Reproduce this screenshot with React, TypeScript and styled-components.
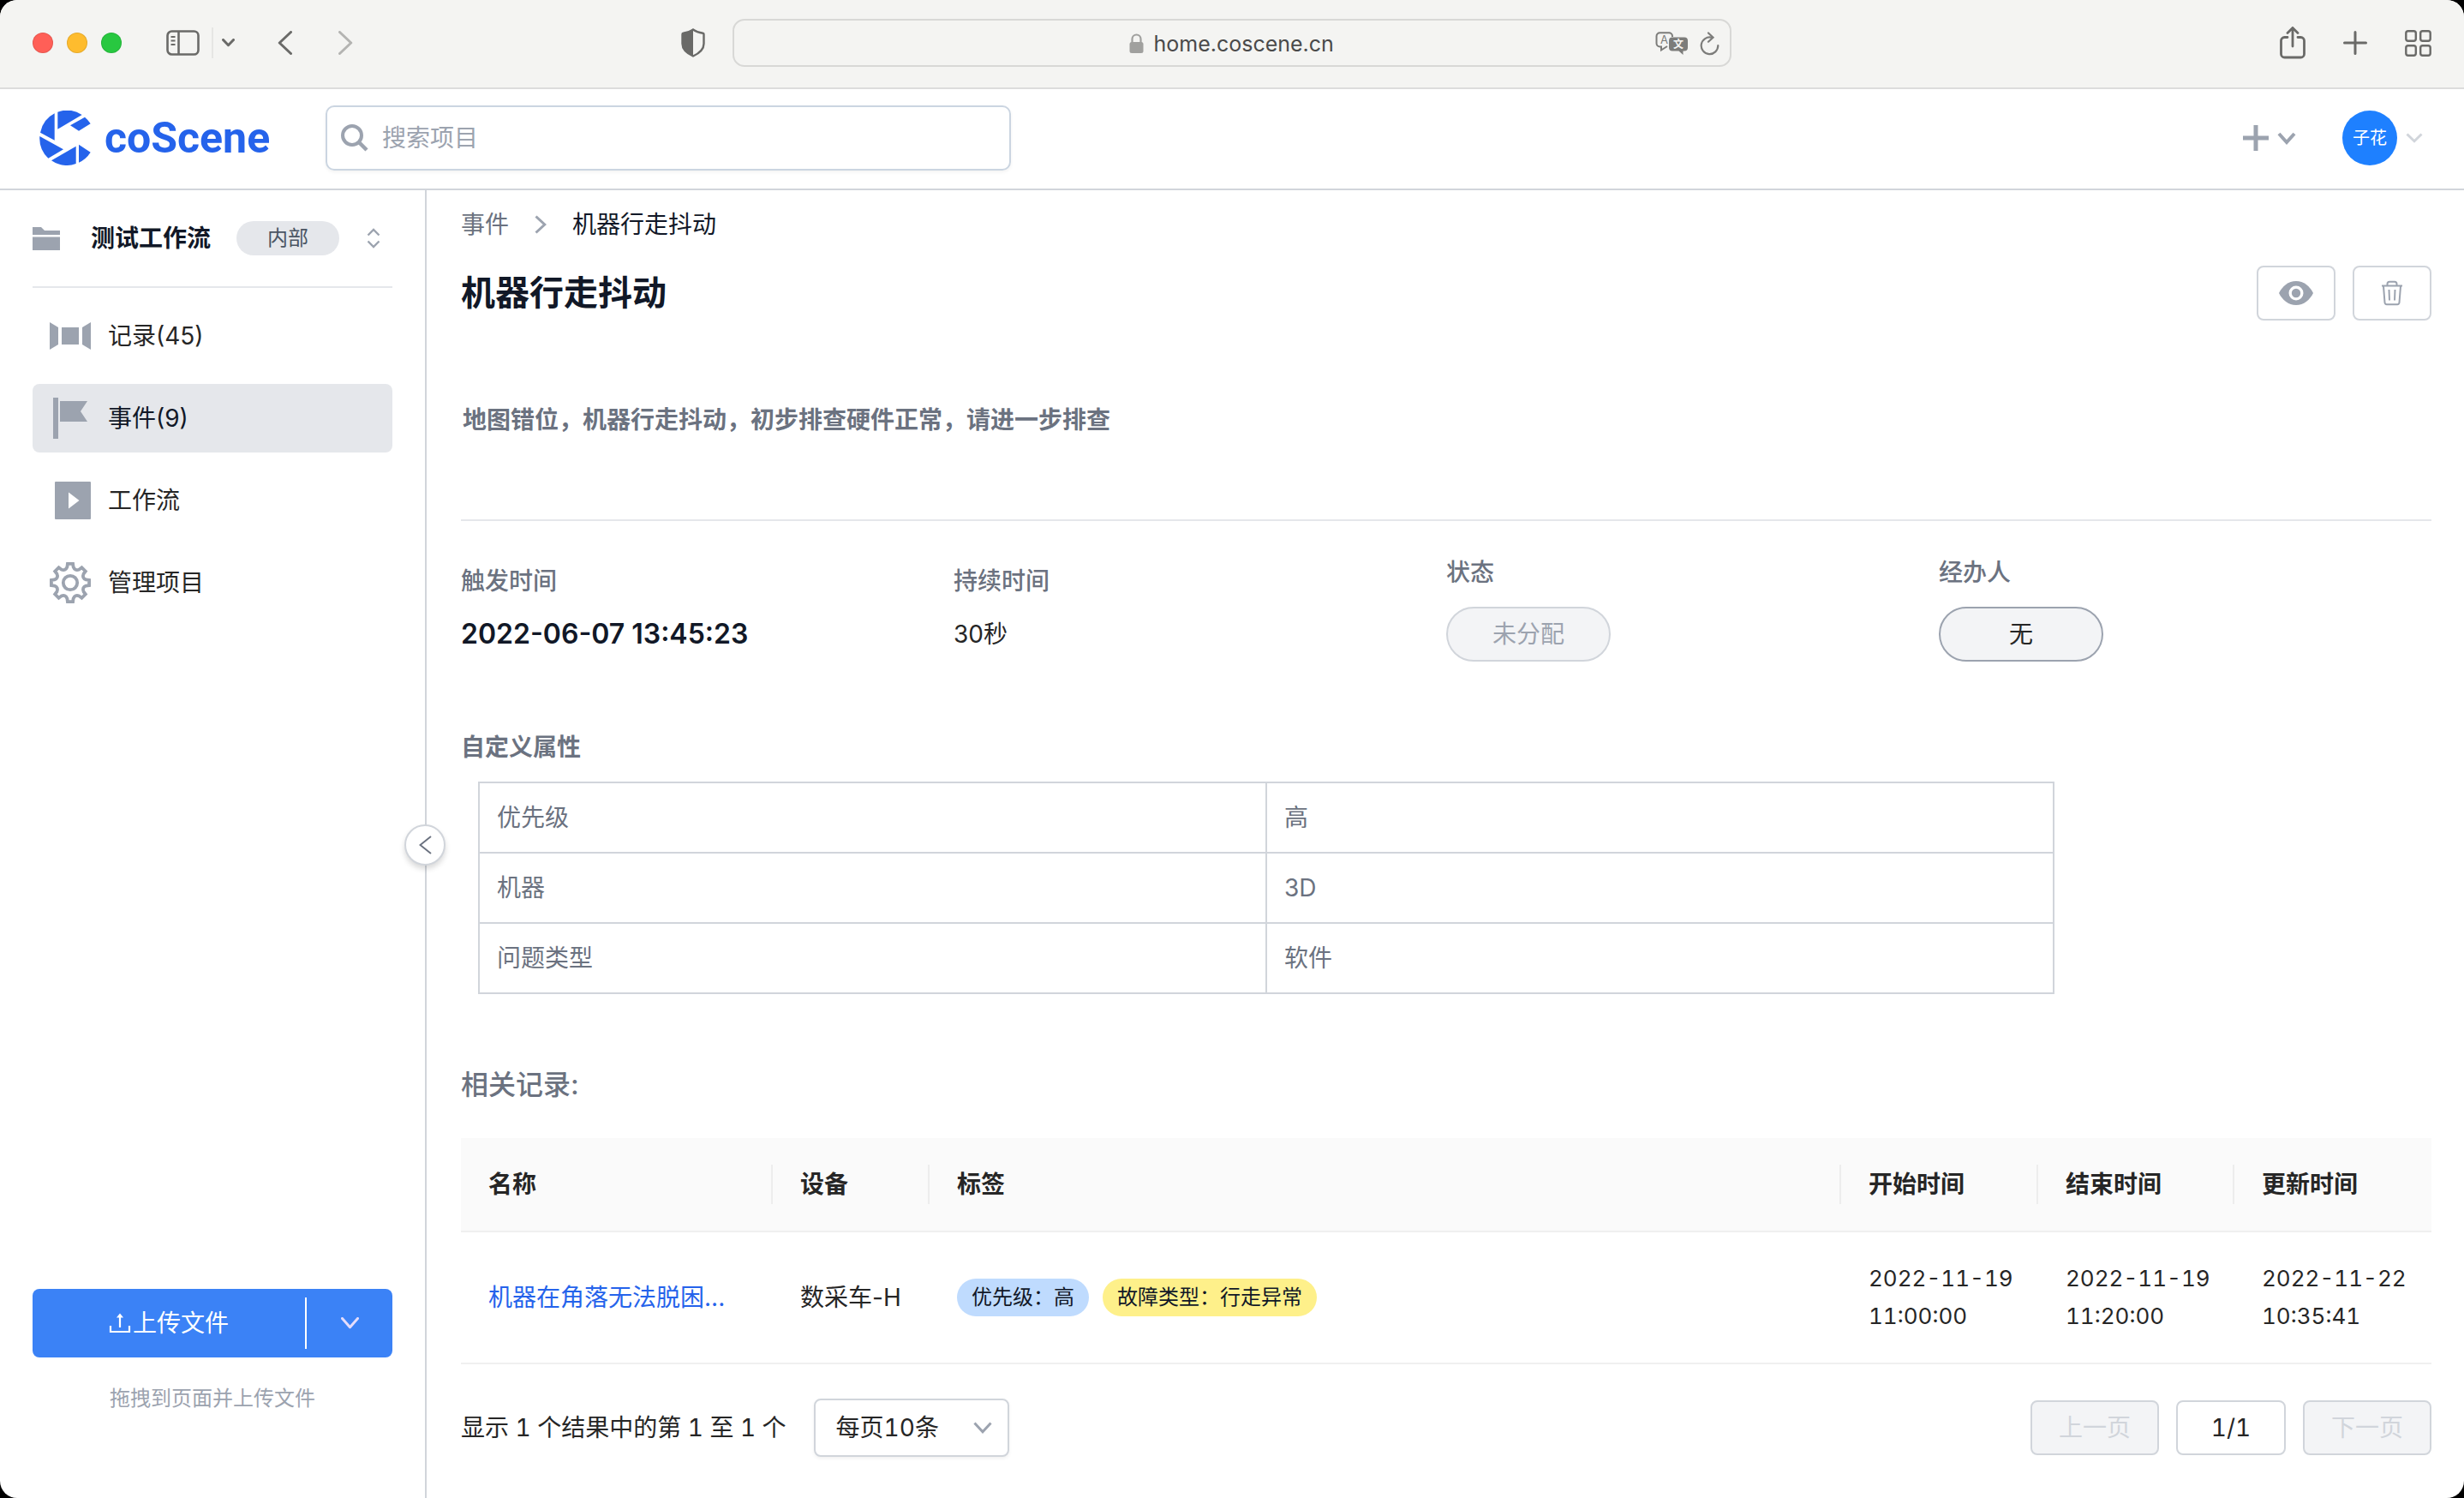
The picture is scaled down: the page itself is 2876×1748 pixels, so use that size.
import React from "react";
import styled, { createGlobalStyle } from "styled-components";

const gray = {
  100: "#f3f4f6",
  200: "#e5e7eb",
  300: "#d1d5db",
  400: "#9ca3af",
  500: "#6b7280",
  600: "#4b5563",
  900: "#111827",
};

const GlobalStyle = createGlobalStyle`
  *, *::before, *::after { box-sizing: border-box; }
  body {
    margin: 0;
    background: #000;
    color: #262626;
    font-family: Inter, "Noto Sans CJK SC", sans-serif;
    font-size: 28px;
    line-height: 40px;
  }
  button, input, select { font: inherit; color: inherit; }
  button { padding: 0; border: 0; background: none; cursor: pointer; }
  h1, h2, p { margin: 0; }
  a { color: inherit; text-decoration: none; }
  svg { display: block; flex: none; }
`;

/* ---------- window ---------- */

const Window = styled.div`
  min-height: 100vh;
  display: flex;
  flex-direction: column;
  background: #fff;
  border-radius: 20px;
  overflow: hidden;
`;

const TitleBar = styled.header`
  display: grid;
  grid-template-columns: minmax(0, 1fr) minmax(0, 1166px) minmax(0, 1fr);
  align-items: center;
  gap: 32px;
  height: 104px;
  padding: 0 38px 2px;
  background: #f4f4f2;
  border-bottom: 2px solid #dcdcdc;
  color: #6a6a68;
`;

const BarLeft = styled.div`
  display: flex;
  align-items: center;
`;

const Lights = styled.div`
  display: flex;
  gap: 16px;
  margin-right: 52px;
`;

const Light = styled.span<{ $color: string }>`
  width: 24px;
  height: 24px;
  border-radius: 50%;
  background: ${(p) => p.$color};
  box-shadow: inset 0 0 0 1px rgba(0, 0, 0, 0.1);
`;

const SidebarToggle = styled.div`
  display: flex;
  align-items: center;
  gap: 10px;
  margin-right: 50px;
`;

const BarRule = styled.span`
  width: 2px;
  height: 36px;
  margin-left: 4px;
  background: #e6e6e4;
`;

const History = styled.div`
  display: flex;
  gap: 54px;
`;

const ShieldButton = styled.button`
  margin-left: auto;
`;

const AddressBar = styled.div`
  display: flex;
  align-items: center;
  justify-content: space-between;
  height: 56px;
  padding: 2px 12px 0;
  border: 2px solid #d8d8d6;
  border-radius: 14px;
`;

const AddressSide = styled.div`
  flex: 1;
  display: flex;
  align-items: center;
  justify-content: flex-end;
  gap: 14px;
`;

const Address = styled.label`
  display: flex;
  align-items: center;
  gap: 12px;
`;

const AddressInput = styled.input`
  width: 212px;
  padding: 0;
  border: 0;
  outline: 0;
  background: none;
  color: #4a4a4a;
  font-size: 25px;
`;

const BarRight = styled.div`
  display: flex;
  align-items: center;
  justify-content: flex-end;
  gap: 44px;
`;

/* ---------- app header ---------- */

const AppHeader = styled.header`
  display: flex;
  align-items: center;
  height: 118px;
  padding: 0 48px 2px 46px;
  border-bottom: 2px solid ${gray[300]};
`;

const Logo = styled.a`
  display: flex;
  align-items: center;
  gap: 16px;
  width: 334px;
  color: #2563eb;
  font-family: Roboto, sans-serif;
  font-size: 50px;
  font-weight: 700;
`;

const SearchBox = styled.label`
  display: flex;
  align-items: center;
  gap: 16px;
  flex: 0 1 800px;
  height: 76px;
  padding: 0 16px;
  border: 2px solid #cbd5e1;
  border-radius: 10px;
  box-shadow: 0 2px 4px rgba(0, 0, 0, 0.05);
  color: ${gray[400]};
`;

const SearchInput = styled.input`
  flex: 1;
  min-width: 0;
  padding: 0;
  border: 0;
  outline: 0;
  background: none;
  &::placeholder {
    color: ${gray[400]};
    opacity: 1;
  }
`;

const HeaderActions = styled.div`
  display: flex;
  align-items: center;
  gap: 54px;
  margin-left: auto;
`;

const HeaderButton = styled.button`
  display: flex;
  align-items: center;
  gap: 10px;
  color: ${gray[400]};
`;

const Avatar = styled.span`
  display: grid;
  place-items: center;
  width: 64px;
  height: 64px;
  border-radius: 50%;
  background: #1e80ff;
  color: #fff;
  font-size: 20px;
`;

/* ---------- body ---------- */

const Body = styled.div`
  flex: 1;
  display: flex;
`;

const Sidebar = styled.aside`
  position: relative;
  flex: 0 0 498px;
  display: flex;
  flex-direction: column;
  padding: 32px 38px 96px;
  border-right: 2px solid ${gray[300]};
`;

const ProjectSwitch = styled.button`
  display: flex;
  align-items: center;
  width: 100%;
  height: 82px;
  padding: 0 14px 32px 0;
  border-bottom: 2px solid ${gray[200]};
  color: ${gray[400]};
`;

const ProjectName = styled.span`
  margin: 0 30px 0 36px;
  color: ${gray[900]};
  font-weight: 700;
`;

const Badge = styled.span`
  padding: 0 36px;
  margin-right: auto;
  border-radius: 20px;
  background: ${gray[200]};
  color: ${gray[600]};
  font-size: 24px;
`;

const Nav = styled.nav`
  display: flex;
  flex-direction: column;
  gap: 16px;
  margin-top: 16px;
`;

const NavItem = styled.a<{ $active?: boolean }>`
  display: flex;
  align-items: center;
  gap: 20px;
  height: 80px;
  padding: 0 20px;
  border-radius: 8px;
  background: ${(p) => (p.$active ? gray[200] : "transparent")};
  color: ${(p) => (p.$active ? gray[900] : "#262626")};
  svg {
    color: ${gray[400]};
  }
`;

const UploadGroup = styled.div`
  display: flex;
  align-items: center;
  height: 80px;
  margin-top: auto;
  border-radius: 8px;
  background: #3b82f6;
  color: #fff;
`;

const UploadButton = styled.button`
  flex: 1;
  display: flex;
  align-items: center;
  justify-content: center;
  gap: 2px;
  height: 60px;
  border-right: 2px solid #fff;
`;

const UploadMore = styled.button`
  display: grid;
  place-items: center;
  width: 100px;
  height: 60px;
  color: #e4dcfb;
`;

const UploadHint = styled.p`
  margin-top: 28px;
  color: ${gray[400]};
  font-size: 24px;
  text-align: center;
`;

const CollapseButton = styled.button`
  position: absolute;
  top: 740px;
  right: -24px;
  display: grid;
  place-items: center;
  width: 48px;
  height: 48px;
  border: 2px solid ${gray[300]};
  border-radius: 50%;
  background: #fff;
  box-shadow: 0 4px 6px rgba(0, 0, 0, 0.15);
  color: ${gray[500]};
`;

const Main = styled.main`
  flex: 1;
  min-width: 0;
  padding: 20px 38px 48px 40px;
`;

const Breadcrumb = styled.nav`
  display: flex;
  align-items: center;
  gap: 30px;
  color: ${gray[500]};
  svg {
    color: ${gray[400]};
  }
`;

const Current = styled.span`
  color: ${gray[900]};
`;

const TitleRow = styled.div`
  display: flex;
  align-items: center;
  justify-content: space-between;
  margin-top: 28px;
`;

const Title = styled.h1`
  color: ${gray[900]};
  font-size: 40px;
  font-weight: 700;
`;

const Actions = styled.div`
  display: flex;
  gap: 20px;
`;

const IconButton = styled.button`
  display: grid;
  place-items: center;
  width: 92px;
  height: 64px;
  border: 2px solid ${gray[300]};
  border-radius: 8px;
  color: ${gray[400]};
`;

const Description = styled.p`
  padding: 96px 2px;
  border-bottom: 2px solid ${gray[200]};
  color: ${gray[500]};
  font-weight: 600;
`;

const Fields = styled.div`
  display: grid;
  grid-template-columns: repeat(4, 1fr);
  align-items: center;
  margin-top: 40px;
`;

const Field = styled.div`
  display: flex;
  flex-direction: column;
  align-items: flex-start;
  gap: 20px;
`;

const FieldLabel = styled.span`
  color: ${gray[500]};
  font-weight: 500;
`;

const FieldValue = styled.span<{ $strong?: boolean }>`
  color: ${(p) => (p.$strong ? gray[900] : "#262626")};
  font-size: ${(p) => (p.$strong ? 32 : 28)}px;
  font-weight: ${(p) => (p.$strong ? 600 : 400)};
  line-height: 44px;
`;

const Pill = styled.button<{ $muted?: boolean }>`
  width: 192px;
  height: 64px;
  border: 2px solid ${(p) => (p.$muted ? gray[300] : gray[400])};
  border-radius: 32px;
  background: ${gray[100]};
  color: ${(p) => (p.$muted ? gray[400] : "#262626")};
`;

const SectionTitle = styled.h2<{ $large?: boolean }>`
  margin: ${(p) => (p.$large ? "84px 0 40px" : "80px 0 20px")};
  color: ${gray[500]};
  font-size: ${(p) => (p.$large ? 32 : 28)}px;
  font-weight: ${(p) => (p.$large ? 500 : 600)};
  line-height: ${(p) => (p.$large ? 44 : 40)}px;
`;

const PropertyTable = styled.table`
  width: 80%;
  margin-left: 20px;
  table-layout: fixed;
  border-collapse: collapse;
  color: ${gray[500]};
  th, td {
    padding: 20px;
    border: 2px solid ${gray[300]};
    font-weight: 400;
    text-align: left;
  }
`;

const RecordTable = styled.table`
  width: 100%;
  table-layout: fixed;
  border-spacing: 0;
  th, td {
    border-bottom: 2px solid #f0f0f0;
    text-align: left;
  }
  th {
    padding: 31px 0;
    background: #fafafa;
    font-weight: 600;
  }
  td {
    padding: 32px;
    line-height: 44px;
  }
`;

const HeadCell = styled.div<{ $last?: boolean }>`
  height: 46px;
  padding: 0 32px;
  border-right: ${(p) => (p.$last ? 0 : 2)}px solid #ededed;
  line-height: 46px;
`;

const RecordLink = styled.a`
  color: #2563eb;
  white-space: nowrap;
`;

const Device = styled.span`
  white-space: nowrap;
`;

const Tags = styled.div`
  display: flex;
  gap: 16px;
`;

const Tag = styled.span<{ $bg: string }>`
  padding: 0 17px;
  border-radius: 22px;
  background: ${(p) => p.$bg};
  color: ${gray[900]};
  font-size: 24px;
`;

const DateLine = styled.div`
  font-size: 26px;
  font-variant-numeric: tabular-nums;
  white-space: nowrap;
`;

const Footer = styled.div`
  display: flex;
  align-items: center;
  margin-top: 40px;
  font-variant-numeric: tabular-nums;
`;

const PageSize = styled.label`
  display: grid;
  align-items: center;
  width: 228px;
  margin-left: 32px;
  svg {
    grid-area: 1 / 1;
    justify-self: end;
    margin-right: 20px;
    color: ${gray[400]};
    pointer-events: none;
  }
`;

const PageSelect = styled.select`
  grid-area: 1 / 1;
  width: 100%;
  height: 68px;
  padding: 0 24px;
  appearance: none;
  border: 2px solid ${gray[300]};
  border-radius: 8px;
  background: #fff;
  box-shadow: 0 2px 4px rgba(0, 0, 0, 0.06);
`;

const Pager = styled.div`
  display: flex;
  gap: 20px;
  margin-left: auto;
`;

const PageButton = styled.button`
  width: 150px;
  height: 64px;
  border: 2px solid ${gray[300]};
  border-radius: 8px;
  &:disabled {
    background: ${gray[100]};
    color: ${gray[300]};
  }
`;

const PageNumber = styled.span`
  width: 128px;
  height: 64px;
  border: 2px solid ${gray[300]};
  border-radius: 8px;
  line-height: 60px;
  text-align: center;
`;

/* ---------- icons ---------- */

const Chevron = ({
  w,
  h,
  d,
  stroke = 3,
  color = "currentColor",
  cap = "butt",
}: {
  w: number;
  h: number;
  d: "down" | "left" | "right";
  stroke?: number;
  color?: string;
  cap?: "butt" | "round";
}) => {
  const s = stroke / 2;
  const tip = stroke * 0.75;
  const pts = {
    down: `${s},${s} ${w / 2},${h - tip} ${w - s},${s}`,
    left: `${w - s},${s} ${tip},${h / 2} ${w - s},${h - s}`,
    right: `${s},${s} ${w - tip},${h / 2} ${s},${h - s}`,
  }[d];
  return (
    <svg width={w} height={h} viewBox={`0 0 ${w} ${h}`} fill="none" stroke={color} strokeWidth={stroke} strokeLinecap={cap} strokeLinejoin={cap === "round" ? "round" : "miter"}>
      <polyline points={pts} />
    </svg>
  );
};

const PanelIcon = () => (
  <svg width="39" height="30" viewBox="0 0 39 30" fill="none" stroke="currentColor" strokeWidth="2.6">
    <rect x="1.5" y="1.5" width="36" height="27" rx="5" />
    <path d="M14.5 2v26" />
    <path d="M5.5 8h5M5.5 12.5h5M5.5 17h5" strokeWidth="2" />
  </svg>
);

const ShieldIcon = () => (
  <svg width="28" height="34" viewBox="0 0 28 34" fill="none">
    <path d="M14 1.5c4 2.8 8 3.6 11.5 4.2.7.1 1 .6 1 1.3v11c0 6-5 11-12.5 14.5C6.5 29 1.5 24 1.5 18V7c0-.7.3-1.2 1-1.3C6 5.1 10 4.3 14 1.5z" stroke="currentColor" strokeWidth="2.4" />
    <path d="M14 1.5v31C6.5 29 1.5 24 1.5 18V7c0-.7.3-1.2 1-1.3C6 5.1 10 4.3 14 1.5z" fill="currentColor" />
  </svg>
);

const LockIcon = () => (
  <svg width="17" height="24" viewBox="0 0 17 24" fill="none">
    <rect x="0.5" y="10" width="16" height="13" rx="2.5" fill="#a0a09e" />
    <path d="M3.5 11V6.5a5 5 0 0 1 10 0V11" stroke="#a0a09e" strokeWidth="2.2" />
  </svg>
);

const TranslateIcon = () => (
  <svg width="38" height="28" viewBox="0 0 38 28">
    <path d="M14 17l-7 4.500v-4H5.500a4 4 0 0 1-4-4V5.200a4 4 0 0 1 4-4H16a4 4 0 0 1 4 4V6" fill="none" stroke="#7c7c7a" strokeWidth="2" />
    <text x="10.500" y="14" fontSize="13" fontFamily="Inter, sans-serif" textAnchor="middle" fill="#7c7c7a">A</text>
    <path d="M20 6.500h14a4 4 0 0 1 4 4v8a4 4 0 0 1-4 4h-1.500V27l-5-4.500H20a4 4 0 0 1-4-4v-8a4 4 0 0 1 4-4z" fill="#7c7c7a" />
    <text x="27" y="19" fontSize="12" fontWeight="700" fontFamily="Noto Sans CJK SC, sans-serif" textAnchor="middle" fill="#f4f4f2">文</text>
  </svg>
);

const ReloadIcon = () => (
  <svg width="23" height="28" viewBox="0 0 23 28" fill="none" stroke="#7c7c7a" strokeWidth="2.2" strokeLinecap="round">
    <path d="M14 6.800A9.800 9.800 0 1 0 21.300 16" />
    <path d="M10 1.500l5.500 5.200-5.500 5" />
  </svg>
);

const ShareIcon = () => (
  <svg width="30" height="38" viewBox="0 0 30 38" fill="none" stroke="currentColor" strokeWidth="2.8" strokeLinecap="round">
    <path d="M9 12.500H5.500a4 4 0 0 0-4 4V32a4 4 0 0 0 4 4h19a4 4 0 0 0 4-4V16.500a4 4 0 0 0-4-4H21" />
    <path d="M15 23V2M9 7.500L15 1.500l6 6" />
  </svg>
);

const PlusThinIcon = () => (
  <svg width="28" height="28" viewBox="0 0 28 28" stroke="currentColor" strokeWidth="3" strokeLinecap="round">
    <path d="M14 1.500v25M1.500 14h25" />
  </svg>
);

const GridIcon = () => (
  <svg width="31" height="31" viewBox="0 0 31 31" fill="none" stroke="currentColor" strokeWidth="2.4">
    <rect x="1.3" y="1.3" width="11.5" height="11.5" rx="2.5" />
    <rect x="18.2" y="1.3" width="11.5" height="11.5" rx="2.5" />
    <rect x="1.3" y="18.2" width="11.5" height="11.5" rx="2.5" />
    <rect x="18.2" y="18.2" width="11.5" height="11.5" rx="2.5" />
  </svg>
);

const LogoMark = () => (
  <svg width="60" height="64" viewBox="48 27 180 192" fill="currentColor">
    <path d="M101 37A96 96 0 0 0 51 104L101 131Z" />
    <path d="M112 32A96 96 0 0 1 197 42L112 92Z" />
    <path d="M156 79L207 50A96 96 0 0 1 227 73L186 98Z" />
    <path d="M49 117L132 163L79 194A96 96 0 0 1 49 117Z" />
    <path d="M90 202L176 152V213A96 96 0 0 1 90 202Z" />
    <path d="M186 146L227 173A96 96 0 0 1 186 209Z" />
  </svg>
);

const SearchIcon = () => (
  <svg width="32" height="32" viewBox="0 0 32 32" fill="none" stroke="currentColor" strokeWidth="4">
    <circle cx="13" cy="13" r="11" />
    <path d="M20.500 20.500L30 30" strokeWidth="4.5" />
  </svg>
);

const PlusIcon = () => (
  <svg width="30" height="30" viewBox="0 0 30 30" stroke="currentColor" strokeWidth="5">
    <path d="M15 0v30M0 15h30" />
  </svg>
);

const FolderIcon = () => (
  <svg width="32" height="28" viewBox="0 0 32 28" fill="currentColor">
    <path d="M0 1h10l4 4h18v5H0z" />
    <path d="M0 12.500h32V28H0z" />
  </svg>
);

const SortIcon = () => (
  <svg width="16" height="24" viewBox="0 0 16 24" fill="none" stroke="currentColor" strokeWidth="2.4">
    <path d="M1.500 8.500L8 2l6.500 6.500M1.500 15.500L8 22l6.500-6.500" />
  </svg>
);

const RecordIcon = () => (
  <svg width="48" height="48" viewBox="0 0 48 48" fill="currentColor">
    <path d="M0 8l10 6v20L0 40z" />
    <path d="M14 14h20v20H14z" />
    <path d="M48 8l-10 6v20l10 6z" />
  </svg>
);

const FlagIcon = () => (
  <svg width="48" height="48" viewBox="0 0 48 48" fill="currentColor">
    <path d="M4 0h6v48H4z" />
    <path d="M12 4h32l-8 12 8 12H12z" />
  </svg>
);

const PlayIcon = () => (
  <svg width="48" height="48" viewBox="0 0 48 48">
    <rect x="6" y="2" width="42" height="44" rx="1" fill="currentColor" />
    <path d="M22 14.500L34.500 24 22 33.500z" fill="#fff" />
  </svg>
);

const at = (deg: number, r: number) => {
  const a = (deg * Math.PI) / 180;
  return `${(24 + r * Math.sin(a)).toFixed(2)} ${(24 - r * Math.cos(a)).toFixed(2)}`;
};

const gearPath =
  Array.from({ length: 8 }, (_, k) => k * 45)
    .map(
      (t, k) =>
        `${k ? "L" : "M"}${at(t - 8, 22.3)}L${at(t + 8, 22.3)}L${at(t + 11, 18.8)}Q${at(t + 22.5, 14.5)} ${at(t + 34, 18.8)}`
    )
    .join("") + "Z";

const GearIcon = () => (
  <svg width="48" height="48" viewBox="0 0 48 48" fill="none" stroke="currentColor" strokeWidth="3.8">
    <path d={gearPath} />
    <circle cx="24" cy="24" r="8.2" />
  </svg>
);

const UploadIcon = () => (
  <svg width="26" height="26" viewBox="0 0 26 26" fill="none" stroke="currentColor" strokeWidth="2.2">
    <path d="M2 16v7h22v-7M13 18V5" />
    <path d="M13 1.500l4 5H9z" fill="currentColor" stroke="none" />
  </svg>
);

const EyeIcon = () => (
  <svg width="40" height="28" viewBox="0 0 40 28">
    <path d="M20 0c9 0 16 6 20 14-4 8-11 14-20 14S4 22 0 14C4 6 11 0 20 0z" fill="currentColor" />
    <circle cx="20" cy="14" r="8.5" fill="#fff" />
    <circle cx="20" cy="14" r="5.2" fill="currentColor" />
  </svg>
);

const TrashIcon = () => (
  <svg width="24" height="30" viewBox="0 0 24 30" fill="none" stroke="currentColor" strokeWidth="2">
    <path d="M0 6.500h24M6.500 6V4.200A2.500 2.500 0 0 1 9 1.700h6a2.500 2.500 0 0 1 2.500 2.500V6" />
    <path d="M2 7l1.500 19a2.400 2.400 0 0 0 2.400 2.200h12.200a2.400 2.400 0 0 0 2.400-2.200L22 7M8.500 11l.5 12.500M15.500 11L15 23.500" />
  </svg>
);

/* ---------- data ---------- */

const navItems = [
  { label: "记录(45)", icon: <RecordIcon /> },
  { label: "事件(9)", icon: <FlagIcon />, active: true },
  { label: "工作流", icon: <PlayIcon /> },
  { label: "管理项目", icon: <GearIcon /> },
];

const properties = [
  ["优先级", "高"],
  ["机器", "3D"],
  ["问题类型", "软件"],
];

const columns = ["名称", "设备", "标签", "开始时间", "结束时间", "更新时间"];

const records = [
  {
    name: "机器在角落无法脱困...",
    device: "数采车-H",
    tags: [
      { text: "优先级：高", bg: "#bfdbfe" },
      { text: "故障类型：行走异常", bg: "#fef08a" },
    ],
    times: ["2022-11-19 11:00:00", "2022-11-19 11:20:00", "2022-11-22 10:35:41"],
  },
];

export default function App() {
  return (
    <Window lang="zh-CN">
      <GlobalStyle />
      <TitleBar>
        <BarLeft>
          <Lights>
            <Light $color="#ff5f57" />
            <Light $color="#febc2e" />
            <Light $color="#28c840" />
          </Lights>
          <SidebarToggle>
            <button aria-label="边栏"><PanelIcon /></button>
            <BarRule />
            <button aria-label="边栏选项"><Chevron w={15} h={10} d="down" cap="round" /></button>
          </SidebarToggle>
          <History>
            <button aria-label="后退"><Chevron w={17} h={28} d="left" cap="round" /></button>
            <button aria-label="前进"><Chevron w={17} h={28} d="right" color="#b4b4b2" cap="round" /></button>
          </History>
          <ShieldButton aria-label="隐私报告"><ShieldIcon /></ShieldButton>
        </BarLeft>
        <AddressBar>
          <AddressSide />
          <Address>
            <LockIcon />
            <AddressInput aria-label="地址" defaultValue="home.coscene.cn" />
          </Address>
          <AddressSide>
            <button aria-label="翻译"><TranslateIcon /></button>
            <button aria-label="重新载入"><ReloadIcon /></button>
          </AddressSide>
        </AddressBar>
        <BarRight>
          <button aria-label="共享"><ShareIcon /></button>
          <button aria-label="新建标签页"><PlusThinIcon /></button>
          <button aria-label="标签页概览"><GridIcon /></button>
        </BarRight>
      </TitleBar>

      <AppHeader>
        <Logo href="#">
          <LogoMark />
          coScene
        </Logo>
        <SearchBox>
          <SearchIcon />
          <SearchInput type="text" placeholder="搜索项目" aria-label="搜索项目" />
        </SearchBox>
        <HeaderActions>
          <HeaderButton aria-label="新建">
            <PlusIcon />
            <Chevron w={22} h={15} d="down" stroke={4} />
          </HeaderButton>
          <HeaderButton aria-label="账户">
            <Avatar>子花</Avatar>
            <Chevron w={20} h={12} d="down" color={gray[300]} />
          </HeaderButton>
        </HeaderActions>
      </AppHeader>

      <Body>
        <Sidebar>
          <ProjectSwitch>
            <FolderIcon />
            <ProjectName>测试工作流</ProjectName>
            <Badge>内部</Badge>
            <SortIcon />
          </ProjectSwitch>
          <Nav>
            {navItems.map((item) => (
              <NavItem key={item.label} href="#" $active={item.active}>
                {item.icon}
                {item.label}
              </NavItem>
            ))}
          </Nav>
          <UploadGroup>
            <UploadButton>
              <UploadIcon />
              上传文件
            </UploadButton>
            <UploadMore aria-label="更多上传方式">
              <Chevron w={21} h={14} d="down" cap="round" />
            </UploadMore>
          </UploadGroup>
          <UploadHint>拖拽到页面并上传文件</UploadHint>
          <CollapseButton aria-label="收起侧栏">
            <Chevron w={15} h={22} d="left" stroke={2} />
          </CollapseButton>
        </Sidebar>

        <Main>
          <Breadcrumb>
            <a href="#">事件</a>
            <Chevron w={14} h={22} d="right" />
            <Current>机器行走抖动</Current>
          </Breadcrumb>

          <TitleRow>
            <Title>机器行走抖动</Title>
            <Actions>
              <IconButton aria-label="关注"><EyeIcon /></IconButton>
              <IconButton aria-label="删除"><TrashIcon /></IconButton>
            </Actions>
          </TitleRow>

          <Description>地图错位，机器行走抖动，初步排查硬件正常，请进一步排查</Description>

          <Fields>
            <Field>
              <FieldLabel>触发时间</FieldLabel>
              <FieldValue $strong>2022-06-07 13:45:23</FieldValue>
            </Field>
            <Field>
              <FieldLabel>持续时间</FieldLabel>
              <FieldValue>30秒</FieldValue>
            </Field>
            <Field>
              <FieldLabel>状态</FieldLabel>
              <Pill $muted>未分配</Pill>
            </Field>
            <Field>
              <FieldLabel>经办人</FieldLabel>
              <Pill>无</Pill>
            </Field>
          </Fields>

          <SectionTitle>自定义属性</SectionTitle>
          <PropertyTable>
            <tbody>
              {properties.map(([name, value]) => (
                <tr key={name}>
                  <th scope="row">{name}</th>
                  <td>{value}</td>
                </tr>
              ))}
            </tbody>
          </PropertyTable>

          <SectionTitle $large>相关记录:</SectionTitle>
          <RecordTable>
            <colgroup>
              <col width="364" />
              <col width="183" />
              <col />
              <col width="230" />
              <col width="229" />
              <col width="230" />
            </colgroup>
            <thead>
              <tr>
                {columns.map((name, i) => (
                  <th key={name} scope="col">
                    <HeadCell $last={i === columns.length - 1}>{name}</HeadCell>
                  </th>
                ))}
              </tr>
            </thead>
            <tbody>
              {records.map((r) => (
                <tr key={r.name}>
                  <td><RecordLink href="#">{r.name}</RecordLink></td>
                  <td><Device>{r.device}</Device></td>
                  <td>
                    <Tags>
                      {r.tags.map((t) => (
                        <Tag key={t.text} $bg={t.bg}>{t.text}</Tag>
                      ))}
                    </Tags>
                  </td>
                  {r.times.map((t) => (
                    <td key={t}>
                      {t.split(" ").map((part) => (
                        <DateLine key={part}>{part}</DateLine>
                      ))}
                    </td>
                  ))}
                </tr>
              ))}
            </tbody>
          </RecordTable>

          <Footer>
            <span>显示 1 个结果中的第 1 至 1 个</span>
            <PageSize>
              <PageSelect aria-label="每页条数" defaultValue="10">
                <option value="10">每页10条</option>
                <option value="20">每页20条</option>
                <option value="50">每页50条</option>
              </PageSelect>
              <Chevron w={22} h={14} d="down" />
            </PageSize>
            <Pager>
              <PageButton disabled>上一页</PageButton>
              <PageNumber>1/1</PageNumber>
              <PageButton disabled>下一页</PageButton>
            </Pager>
          </Footer>
        </Main>
      </Body>
    </Window>
  );
}
